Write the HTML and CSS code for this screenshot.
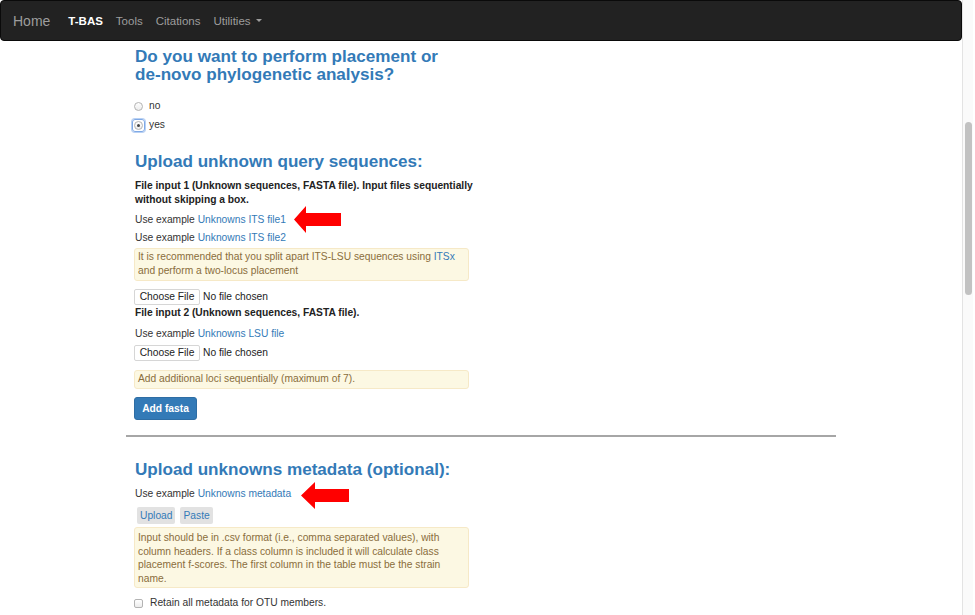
FILE: index.html
```html
<!DOCTYPE html>
<html lang="en">
<head>
<meta charset="utf-8">
<title>T-BAS</title>
<link rel="stylesheet" href="styles.css">
</head>
<body>
<div class="window">
  <div class="viewport">
    <nav class="navbar">
      <a class="brand">Home</a>
      <ul class="nav">
        <li class="active">T-BAS</li>
        <li>Tools</li>
        <li>Citations</li>
        <li>Utilities <span class="caret"></span></li>
      </ul>
    </nav>

    <div class="container">
      <div class="col">
        <h3 class="q1">Do you want to perform placement or<br>de-novo phylogenetic analysis?</h3>
        <div class="radios">
          <div class="radio"><span class="radio-mark"></span><span>no</span></div>
          <div class="radio radio-second"><span class="focus-ring"><span class="radio-mark checked"></span></span><span>yes</span></div>
        </div>

        <h3 class="q2">Upload unknown query sequences:</h3>
        <p class="label l1">File input 1 (Unknown sequences, FASTA file). Input files sequentially<br>without skipping a box.</p>
        <p class="example ex1">Use example <a>Unknowns ITS file1</a></p>
        <p class="example ex2">Use example <a>Unknowns ITS file2</a></p>
        <div class="alert a1">It is recommended that you split apart ITS-LSU sequences using <a>ITSx</a><br>and perform a two-locus placement</div>
        <div class="file f1"><span class="choose">Choose File</span><span class="nofile">No file chosen</span></div>
        <p class="label l2">File input 2 (Unknown sequences, FASTA file).</p>
        <p class="example ex3">Use example <a>Unknowns LSU file</a></p>
        <div class="file f2"><span class="choose">Choose File</span><span class="nofile">No file chosen</span></div>
        <div class="alert a2">Add additional loci sequentially (maximum of 7).</div>
        <div class="btn-wrap"><span class="btn-primary">Add fasta</span></div>
      </div>

      <hr class="divider">

      <div class="col">
        <h3 class="q3">Upload unknowns metadata (optional):</h3>
        <p class="example ex4">Use example <a>Unknowns metadata</a></p>
        <div class="btn-row"><span class="btn-light">Upload</span><span class="btn-light">Paste</span></div>
        <div class="alert a3">Input should be in .csv format (i.e., comma separated values), with<br>column headers. If a class column is included it will calculate class<br>placement f-scores. The first column in the table must be the strain<br>name.</div>
        <div class="check-row"><span class="check-mark"></span><span>Retain all metadata for OTU members.</span></div>
      </div>
    </div>

    <svg class="arrow arrow1" width="47" height="27" viewBox="0 0 47 27"><polygon points="0,13.5 12,0 12,7 47,7 47,20 12,20 12,27" fill="#ff0000"/></svg>
    <svg class="arrow arrow2" width="48" height="27" viewBox="0 0 48 27"><polygon points="0,13.5 14,0 14,7 48,7 48,20 14,20 14,27" fill="#ff0000"/></svg>
  </div>
  <div class="scrollbar"><div class="thumb"></div></div>
  <div class="edge"></div>
</div>
</body>
</html>
```
FILE: styles.css
```css
* { box-sizing: border-box; }
html, body { margin: 0; padding: 0; }
body {
  font-family: "Liberation Sans", Arial, Helvetica, sans-serif;
  font-size: 10.25px;
  line-height: 14px;
  color: #333;
  background: #fff;
  width: 975px;
  height: 615px;
  overflow: hidden;
}
a { color: #337ab7; text-decoration: none; }
p { margin: 0; padding-left: 1px; }

.window { display: flex; height: 615px; }
.viewport { position: relative; flex: 0 0 962px; height: 615px; overflow: hidden; }
.scrollbar {
  flex: 0 0 11px;
  background: #fafafa;
  border-left: 1px solid #e3e3e3;
  padding-top: 122px;
  padding-left: 2px;
}
.thumb { width: 7px; height: 173px; background: #c2c2c2; border-radius: 4px; }
.edge { flex: 0 0 2px; background: #fff; }

/* navbar */
.navbar {
  height: 41px;
  background: #222;
  border: 1px solid #0a0a0a;
  border-radius: 4px;
  display: flex;
  align-items: center;
  padding-left: 12px;
}
.brand { color: #9d9d9d; font-size: 14px; margin-right: 18px; margin-top: 1px; }
.nav { list-style: none; margin: 0; padding: 0; display: flex; gap: 13px; font-size: 11.5px; color: #9d9d9d; }
.nav li { display: flex; align-items: center; }
.nav li.active { color: #fff; font-weight: bold; }
.caret {
  display: inline-block;
  width: 0; height: 0;
  margin-left: 5px;
  border-top: 3px solid #9d9d9d;
  border-left: 3px solid transparent;
  border-right: 3px solid transparent;
}

/* content */
.container { margin-left: 126px; width: 710px; }
.col { padding-left: 8px; }
h3 {
  margin: 0;
  padding-left: 1px;
  font-size: 17.1px;
  line-height: 18px;
  font-weight: bold;
  color: #337ab7;
  white-space: nowrap;
}
.q1 { margin-top: 7px; }
.radios { margin-top: 15px; }
.radio { display: flex; align-items: center; height: 14px; gap: 6px; }
.radio-second { margin-top: 5px; }
.radio-mark {
  width: 9px; height: 9px;
  border-radius: 50%;
  border: 1px solid #b3b3b3;
  background: linear-gradient(#fff, #ececec);
  display: inline-flex;
  align-items: center;
  justify-content: center;
}
.radio-mark.checked::after {
  content: "";
  width: 3px; height: 3px;
  border-radius: 50%;
  background: #444;
}
.focus-ring {
  display: inline-flex;
  margin-left: -2px;
  margin-right: -2px;
  padding: 1px;
  border: 1px solid #7fa9e6;
  border-radius: 3px;
  box-shadow: 0 0 0 1px #b9d1f3;
}

.q2 { margin-top: 21px; }
.label { font-weight: bold; color: #222; white-space: nowrap; }
.l1 { margin-top: 8px; }
.ex1 { margin-top: 6px; }
.ex2 { margin-top: 4px; }
.alert {
  width: 335px;
  background: #fcf8e3;
  border: 1px solid #f6e9c7;
  border-radius: 3px;
  color: #8a6d3b;
  padding: 1px 3px 2px;
  white-space: nowrap;
}
.a1 { margin-top: 3px; }
.file { display: flex; align-items: center; height: 16px; }
.choose {
  height: 16px;
  width: 66px;
  border: 1px solid #d6d6d6;
  border-radius: 2px;
  background: #fff;
  color: #222;
  display: inline-flex;
  align-items: center;
  justify-content: center;
}
.nofile { margin-left: 3px; color: #222; }
.f1 { margin-top: 8px; }
.l2 { margin-top: 1px; }
.ex3 { margin-top: 7px; }
.f2 { margin-top: 4px; }
.a2 { margin-top: 9px; }
.btn-wrap { margin-top: 8px; display: flex; }
.btn-primary {
  height: 23px;
  width: 63px;
  display: inline-flex;
  align-items: center;
  justify-content: center;
  background: #337ab7;
  border: 1px solid #2e6da4;
  border-radius: 3px;
  color: #fff;
  font-weight: 600;
}
.divider {
  margin: 15px 0 0;
  height: 2px;
  border: none;
  background: #a6a6a6;
}
.q3 { margin-top: 24px; }
.ex4 { margin-top: 8px; }
.btn-row { margin-top: 6px; display: flex; gap: 5px; padding-left: 3px; }
.btn-light {
  height: 17px;
  padding: 0 3px;
  background: #e2e2e2;
  border-radius: 2px;
  color: #337ab7;
  display: inline-flex;
  align-items: center;
}
.a3 { margin-top: 3px; line-height: 13.5px; padding: 3px 3px 2px; }
.check-row { margin-top: 8px; display: flex; align-items: center; height: 14px; gap: 7px; }
.check-mark {
  width: 9px; height: 9px;
  border: 1px solid #b3b3b3;
  border-radius: 2px;
  background: linear-gradient(#fff, #ececec);
}

/* annotation arrows */
.arrow { position: absolute; display: block; }
.arrow1 { left: 294px; top: 206px; }
.arrow2 { left: 301px; top: 482px; }
```
